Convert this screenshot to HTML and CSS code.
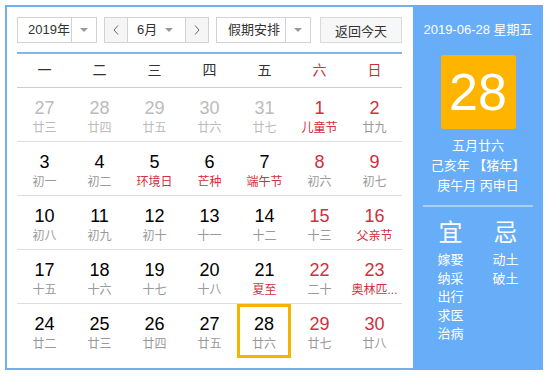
FILE: index.html
```html
<!DOCTYPE html>
<html lang="zh-CN">
<head>
    <meta charset="UTF-8">
    <title>万年历</title>
    <link rel="stylesheet" href="styles.css">
</head>
<body>
    <div class="calendar">
        <div class="main">
            <div class="toolbar">
                <div class="select year">
                    <span class="val">2019年</span>
                    <span class="arrow"><i class="caret"></i></span>
                </div>
                <div class="select month">
                    <span class="nav nav-prev">
                        <svg width="6" height="10" viewBox="0 0 6 10"><polyline points="5,0.5 1,5 5,9.5" fill="none" stroke="#666" stroke-width="1"/></svg>
                    </span>
                    <span class="val">6月<i class="caret"></i></span>
                    <span class="nav nav-next">
                        <svg width="6" height="10" viewBox="0 0 6 10"><polyline points="1,0.5 5,5 1,9.5" fill="none" stroke="#666" stroke-width="1"/></svg>
                    </span>
                </div>
                <div class="select holiday">
                    <span class="val">假期安排</span>
                    <span class="arrow"><i class="caret"></i></span>
                </div>
                <button class="today-btn">返回今天</button>
            </div>

            <div class="week-head">
                <span>一</span><span>二</span><span>三</span><span>四</span><span>五</span>
                <span class="weekend">六</span><span class="weekend">日</span>
            </div>

            <div class="days">
                <div class="day other"><b>27</b><small>廿三</small></div>
                <div class="day other"><b>28</b><small>廿四</small></div>
                <div class="day other"><b>29</b><small>廿五</small></div>
                <div class="day other"><b>30</b><small>廿六</small></div>
                <div class="day other"><b>31</b><small>廿七</small></div>
                <div class="day weekend"><b>1</b><small class="fest">儿童节</small></div>
                <div class="day weekend"><b>2</b><small>廿九</small></div>

                <div class="day"><b>3</b><small>初一</small></div>
                <div class="day"><b>4</b><small>初二</small></div>
                <div class="day"><b>5</b><small class="fest">环境日</small></div>
                <div class="day"><b>6</b><small class="fest">芒种</small></div>
                <div class="day"><b>7</b><small class="fest">端午节</small></div>
                <div class="day weekend"><b>8</b><small>初六</small></div>
                <div class="day weekend"><b>9</b><small>初七</small></div>

                <div class="day"><b>10</b><small>初八</small></div>
                <div class="day"><b>11</b><small>初九</small></div>
                <div class="day"><b>12</b><small>初十</small></div>
                <div class="day"><b>13</b><small>十一</small></div>
                <div class="day"><b>14</b><small>十二</small></div>
                <div class="day weekend"><b>15</b><small>十三</small></div>
                <div class="day weekend"><b>16</b><small class="fest">父亲节</small></div>

                <div class="day"><b>17</b><small>十五</small></div>
                <div class="day"><b>18</b><small>十六</small></div>
                <div class="day"><b>19</b><small>十七</small></div>
                <div class="day"><b>20</b><small>十八</small></div>
                <div class="day"><b>21</b><small class="fest">夏至</small></div>
                <div class="day weekend"><b>22</b><small>二十</small></div>
                <div class="day weekend"><b>23</b><small class="fest">奥林匹...</small></div>

                <div class="day"><b>24</b><small>廿二</small></div>
                <div class="day"><b>25</b><small>廿三</small></div>
                <div class="day"><b>26</b><small>廿四</small></div>
                <div class="day"><b>27</b><small>廿五</small></div>
                <div class="day today"><b>28</b><small>廿六</small></div>
                <div class="day weekend"><b>29</b><small>廿七</small></div>
                <div class="day weekend"><b>30</b><small>廿八</small></div>
            </div>
        </div>

        <aside class="panel">
            <div class="panel-date">2019-06-28 星期五</div>
            <div class="big-day">28</div>
            <div class="lunar">
                <p>五月廿六</p>
                <p>己亥年 【猪年】</p>
                <p>庚午月 丙申日</p>
            </div>
            <div class="almanac">
                <div class="col">
                    <h4>宜</h4>
                    <p>嫁娶</p>
                    <p>纳采</p>
                    <p>出行</p>
                    <p>求医</p>
                    <p>治病</p>
                </div>
                <div class="col">
                    <h4>忌</h4>
                    <p>动土</p>
                    <p>破土</p>
                </div>
            </div>
        </aside>
    </div>
</body>
</html>
```

FILE: styles.css
```css
body {
    margin: 0;
    font-family: "Liberation Sans", "Noto Sans CJK SC", sans-serif;
    background: #fff;
}
.calendar {
    display: flex;
    margin: 5px 0 0 5px;
    width: 538px;
}
.main {
    width: 408px;
    box-sizing: border-box;
    border: 2px solid #78aee6;
    border-right: none;
    padding: 10px 11px 10px 10px;
}

/* toolbar */
.toolbar {
    display: flex;
    height: 26px;
    margin-bottom: 9px;
    font-size: 13px;
    color: #333;
}
.select {
    display: flex;
    box-sizing: border-box;
    height: 26px;
    border: 1px solid #d2d2d2;
    background: #fff;
}
.select .val {
    flex: 1;
    line-height: 24px;
    padding-left: 10px;
    white-space: nowrap;
}
.select .arrow {
    width: 24px;
    border-left: 1px solid #d2d2d2;
    display: flex;
    align-items: center;
    justify-content: center;
}
.caret {
    display: inline-block;
    width: 0;
    height: 0;
    border-left: 4px solid transparent;
    border-right: 4px solid transparent;
    border-top: 4px solid #999;
}
.year {
    width: 80px;
}
.month {
    width: 105px;
    margin-left: 7px;
}
.month .val {
    display: flex;
    align-items: center;
    justify-content: space-between;
    padding: 0 12px 0 9px;
}
.nav {
    width: 22px;
    background: #f5f5f5;
    display: flex;
    align-items: center;
    justify-content: center;
}
.nav-prev {
    border-right: 1px solid #d2d2d2;
}
.nav-next {
    border-left: 1px solid #d2d2d2;
}
.holiday {
    width: 95px;
    margin-left: 7px;
}
.holiday .val {
    padding-left: 11px;
}
.today-btn {
    width: 82px;
    height: 26px;
    margin-left: 9px;
    padding: 0;
    border: 1px solid #d9d9d9;
    background: #f7f7f7;
    font-family: inherit;
    font-size: 13px;
    color: #333;
}

/* grid */
.week-head {
    display: grid;
    grid-template-columns: repeat(7, 55px);
    height: 33px;
    line-height: 33px;
    border-top: 2px solid #7db7f0;
    border-bottom: 1px solid #ccc;
    text-align: center;
    font-size: 14px;
    color: #333;
}
.week-head .weekend {
    color: #c9303b;
}
.days {
    display: grid;
    grid-template-columns: repeat(7, 55px);
}
.day {
    height: 54px;
    box-sizing: border-box;
    padding-top: 10px;
    border-bottom: 1px solid #ddd;
    text-align: center;
}
.days .day:nth-last-child(-n+7) {
    border-bottom: none;
}
.day b {
    display: block;
    font-weight: normal;
    font-size: 18px;
    line-height: 20px;
    color: #000;
}
.day small {
    display: block;
    margin-top: 2px;
    font-size: 12px;
    line-height: 16px;
    color: #999;
    white-space: nowrap;
}
.day.weekend b {
    color: #d22e3b;
}
.day small.fest {
    color: #d22e3b;
}
.day.other b,
.day.other small {
    color: #bbb;
}
.days .day.today {
    width: 54px;
    height: 54px;
    padding-top: 7px;
    border: 3px solid #f5b400;
}

/* right panel */
.panel {
    width: 130px;
    background: #67adf8;
    color: #fff;
    text-align: center;
    padding: 16px 10px 0;
    box-sizing: border-box;
}
.panel-date {
    font-size: 13px;
    line-height: 18px;
    white-space: nowrap;
}
.big-day {
    width: 75px;
    height: 74px;
    margin: 16px auto 0;
    background: #ffb400;
    font-size: 52px;
    line-height: 74px;
    border-radius: 2px;
}
.lunar {
    margin-top: 7px;
    padding-bottom: 9px;
    border-bottom: 2px solid #a9d0fb;
}
.lunar p {
    margin: 0;
    font-size: 13px;
    line-height: 20px;
}
.almanac {
    display: flex;
    margin-top: 12px;
}
.almanac .col {
    width: 56px;
}
.almanac h4 {
    margin: 0 0 4px;
    font-size: 24px;
    line-height: 28px;
    font-weight: normal;
}
.almanac p {
    margin: 0;
    font-size: 13px;
    line-height: 18.5px;
}
```
